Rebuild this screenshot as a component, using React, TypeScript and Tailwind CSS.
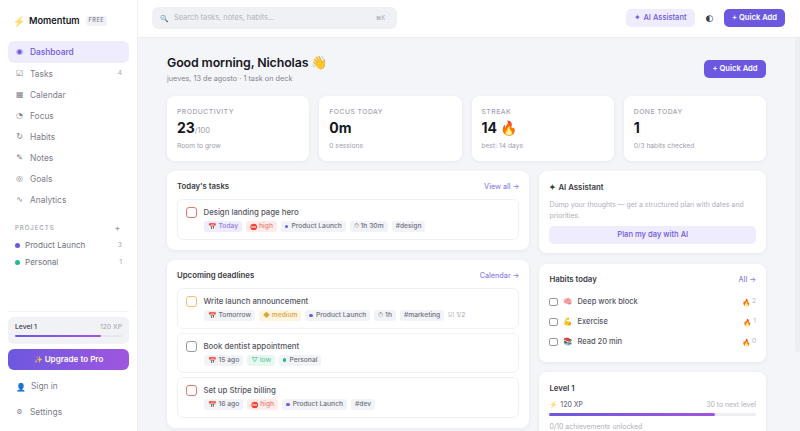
import React from "react";

const nav: [string, string, string?][] = [
  ["◉", "Dashboard"],
  ["☑", "Tasks", "4"],
  ["▦", "Calendar"],
  ["◔", "Focus"],
  ["↻", "Habits"],
  ["✎", "Notes"],
  ["◎", "Goals"],
  ["∿", "Analytics"],
];

function Chip({ tone = "gray", children }: { tone?: string; children: React.ReactNode }) {
  const cls =
    tone === "violet"
      ? "bg-[#efecfd] text-[#8f7fe8]"
      : tone === "red"
        ? "bg-[#fdecea] text-[#ec7f78]"
        : tone === "amber"
          ? "bg-[#fdf5e0] text-[#d9a441]"
          : tone === "green"
            ? "bg-[#e8f8f1] text-[#5ec9a0]"
            : "bg-[#f2f3f6] text-[#71717f]";
  return (
    <span className={`flex h-[11px] items-center gap-[2px] rounded-[3px] px-[4px] text-[6.7px] font-medium leading-none ${cls}`}>
      {children}
    </span>
  );
}

function Dot({ color }: { color: string }) {
  return <span className={`mr-[1px] h-[3.5px] w-[3.5px] rounded-full ${color}`} />;
}

function Cal() {
  return <span className="text-[7px] leading-none">📅</span>;
}

function Stop() {
  return <span className="text-[6px] leading-none">⛔</span>;
}

function Task({ title, box, chips }: { title: string; box: string; chips: React.ReactNode }) {
  return (
    <div className="flex h-[40.5px] gap-[6.5px] rounded-[6px] border border-[#f0f1f5] bg-white pl-[8px] pt-[7px]">
      <span className={`h-[11px] w-[11px] shrink-0 rounded-[3px] border ${box}`} />
      <div className="flex flex-col gap-[4px]">
        <div className="text-[7.8px] font-medium leading-[10px] text-[#55555f]">{title}</div>
        <div className="flex items-center gap-[4px]">{chips}</div>
      </div>
    </div>
  );
}

function Stat({ label, value, unit, sub }: { label: string; value: React.ReactNode; unit?: string; sub: string }) {
  return (
    <div className="h-[65px] rounded-[8px] bg-white px-[10px] pt-[10.5px] shadow-[0_1px_4px_rgba(30,30,60,0.06)]">
      <div className="text-[6.8px] font-medium leading-[9px] tracking-[0.07em] text-[#a5a5b0]">{label}</div>
      <div className="mt-[2.5px] flex h-[20px] items-baseline text-[14px] font-bold leading-[20px] text-[#17171f]">
        {value}
        {unit && <span className="text-[7.5px] font-normal text-[#9a9aa6]">{unit}</span>}
      </div>
      <div className="mt-[3.5px] text-[6.7px] leading-[9px] text-[#a0a0ab]">{sub}</div>
    </div>
  );
}

function Habit({ emoji, name, n }: { emoji: string; name: string; n: string }) {
  return (
    <div className="flex h-[20px] items-center">
      <span className="mr-[5.5px] h-[8.5px] w-[8.5px] rounded-[2px] border border-[#9a9aa3]" />
      <span className="mr-[5px] w-[9px] text-[7.5px] leading-none">{emoji}</span>
      <span className="text-[7.5px] font-medium text-[#55555f]">{name}</span>
      <span className="ml-auto flex items-center gap-[1px] text-[6.5px] text-[#b5b5be]">
        <span className="text-[7px] leading-none">🔥</span> {n}
      </span>
    </div>
  );
}

const card = "rounded-[8px] bg-white px-[10px] pt-[10px] shadow-[0_1px_4px_rgba(30,30,60,0.06)]";
const title = "text-[7.8px] font-semibold text-[#3a3a44]";
const link = "text-[7.2px] font-medium text-[#8f7fe8]";

export default function App() {
  return (
    <div className="flex h-screen overflow-hidden bg-white font-['Inter',sans-serif] text-[#17171f]">
      <aside className="flex w-[138px] shrink-0 flex-col border-r border-[#eceef2] bg-white px-[8px]">
        <div className="flex h-[41px] items-center gap-[4px] pl-[5px]">
          <span className="text-[10px] leading-none opacity-70">⚡</span>
          <span className="text-[9.2px] font-semibold text-[#17171f]">Momentum</span>
          <span className="ml-[2px] rounded-[3px] bg-[#f1f2f6] px-[3px] py-[1.5px] text-[5.6px] font-semibold leading-[7px] tracking-[0.08em] text-[#8c8c98]">FREE</span>
        </div>
        <nav className="flex flex-col">
          {nav.map(([g, label, n], i) => (
            <div
              key={label}
              className={`flex items-center rounded-[6px] pl-[8px] pr-[7px] text-[8.4px] ${
                i === 0 ? "h-[22px] bg-[#efecfd] font-medium text-[#6c58e0]" : "h-[21px] pt-[1px] text-[#7d7d89]"
              }`}
            >
              <span className="mr-[7px] w-[7px] text-center font-['DejaVu_Sans',sans-serif] text-[8px] leading-none">{g}</span>
              {label}
              {n && <span className="ml-auto text-[6.5px] text-[#a5a5b0]">{n}</span>}
            </div>
          ))}
        </nav>
        <div className="mt-[12px] flex h-[12px] items-center justify-between pl-[7px] pr-[9px] text-[6.2px] font-medium tracking-[0.14em] text-[#a0a0ab]">
          PROJECTS <span className="text-[8px] tracking-normal text-[#8c8c98]">+</span>
        </div>
        <div className="mt-[3px] flex flex-col">
          <div className="flex h-[17px] items-center pl-[7px] pr-[7px] text-[8.1px] text-[#6f6f7b]">
            <span className="mr-[5.5px] h-[4.5px] w-[4.5px] rounded-full bg-[#6c58e0]" />
            Product Launch
            <span className="ml-auto text-[6.8px] text-[#a5a5b0]">3</span>
          </div>
          <div className="flex h-[17px] items-center pl-[7px] pr-[7px] text-[8.1px] text-[#6f6f7b]">
            <span className="mr-[5.5px] h-[4.5px] w-[4.5px] rounded-full bg-[#22b98a]" />
            Personal
            <span className="ml-auto text-[6.8px] text-[#a5a5b0]">1</span>
          </div>
        </div>
        <div className="mt-auto border-t border-[#f1f2f5] pt-[5px]">
          <div className="h-[27px] rounded-[6px] bg-[#f1f2f6] px-[7px] pt-[5px]">
            <div className="flex items-center justify-between text-[6.8px] leading-[9px]">
              <span className="font-semibold text-[#55555f]">Level 1</span>
              <span className="text-[#a5a5b0]">120 XP</span>
            </div>
            <div className="mt-[4px] h-[2px] rounded-full bg-[#e6e7ee]">
              <div className="h-full w-[80%] rounded-full bg-gradient-to-r from-[#6c58e0] to-[#a055e0]" />
            </div>
          </div>
          <div className="mt-[5px] flex h-[21px] items-center justify-center gap-[2px] rounded-[6px] bg-gradient-to-r from-[#6c58e0] to-[#a055e0] text-[8.1px] font-semibold text-white">
            <span className="text-[7px] leading-none opacity-80">✨</span>Upgrade to Pro
          </div>
          <div className="mt-[4px] mb-[1px] flex h-[25px] items-center pl-[8px] text-[8.4px] text-[#7d7d89]">
            <span className="mr-[7px] w-[8px] text-[8px] leading-none">👤</span>Sign in
          </div>
          <div className="flex h-[25px] items-center pb-[1px] pl-[8px] text-[8.4px] text-[#7d7d89]">
            <span className="mr-[7px] w-[7px] text-center font-['DejaVu_Sans',sans-serif] text-[7px] leading-none">⚙</span>Settings
          </div>
          <div className="h-[6px]" />
        </div>
      </aside>

      <div className="flex min-w-0 flex-1 flex-col">
        <header className="flex h-[38px] shrink-0 items-center border-b border-[#eceef2] bg-white pb-[1px] pl-[14px] pr-[15px]">
          <div className="flex h-[22px] w-[245px] items-center rounded-[6px] bg-[#f0f1f5] pl-[8px] pr-[12px]">
            <span className="mr-[5px] text-[7px] leading-none">🔍</span>
            <span className="text-[7.4px] text-[#b0b0ba]">Search tasks, notes, habits...</span>
            <span className="ml-auto text-[5.6px] text-[#a5a5b0]">⌘K</span>
          </div>
          <div className="ml-auto flex h-[18px] w-[69px] items-center justify-center rounded-[5px] bg-[#efecfd] text-[7.6px] font-medium text-[#6c58e0]">
            ✦ AI Assistant
          </div>
          <span className="mx-[10px] w-[9px] text-center font-['DejaVu_Sans',sans-serif] text-[9px] leading-none text-[#3a3a44]">◐</span>
          <div className="flex h-[18px] w-[61px] items-center justify-center rounded-[5px] bg-[#6c58e0] text-[7.6px] font-semibold text-white">
            + Quick Add
          </div>
        </header>

        <div className="flex min-h-0 flex-1 bg-[#f4f5f9]">
          <main className="min-h-0 min-w-0 flex-1 overflow-hidden pl-[29px] pr-[29px] pt-[14px]">
            <div className="flex items-start justify-between">
              <div>
                <h1 className="flex items-center gap-[3px] text-[12.4px] font-semibold leading-[21px] tracking-[-0.01em] text-[#17171f]">
                  Good morning, Nicholas <span className="text-[13px] leading-none">👋</span>
                </h1>
                <p className="mt-[1px] text-[7.3px] leading-[10px] text-[#84848f]">jueves, 13 de agosto · 1 task on deck</p>
              </div>
              <div className="mt-[8px] flex h-[18px] w-[62px] items-center justify-center rounded-[5px] bg-[#6c58e0] text-[7.6px] font-semibold text-white">
                + Quick Add
              </div>
            </div>

            <div className="mt-[12px] grid grid-cols-4 gap-[10px]">
              <Stat label="PRODUCTIVITY" value="23" unit="/100" sub="Room to grow" />
              <Stat label="FOCUS TODAY" value="0m" sub="0 sessions" />
              <Stat label="STREAK" value="14 🔥" sub="best: 14 days" />
              <Stat label="DONE TODAY" value="1" sub="0/3 habits checked" />
            </div>

            <div className="mt-[10px] grid grid-cols-[1.6fr_1fr] items-start gap-[10px]">
              <div className="flex flex-col gap-[10px]">
                <section className={`h-[79px] ${card}`}>
                  <div className="flex h-[12px] items-center justify-between">
                    <h2 className={title}>Today's tasks</h2>
                    <span className={link}>View all →</span>
                  </div>
                  <div className="mt-[6px]">
                    <Task
                      title="Design landing page hero"
                      box="border-[#e5786f]"
                      chips={
                        <>
                          <Chip tone="violet"><Cal />Today</Chip>
                          <Chip tone="red"><Stop />high</Chip>
                          <Chip><Dot color="bg-[#6c58e0]" />Product Launch</Chip>
                          <Chip>⏱ 1h 30m</Chip>
                          <Chip>#design</Chip>
                        </>
                      }
                    />
                  </div>
                </section>
                <section className={`h-[168px] ${card}`}>
                  <div className="flex h-[12px] items-center justify-between">
                    <h2 className={title}>Upcoming deadlines</h2>
                    <span className={link}>Calendar →</span>
                  </div>
                  <div className="mt-[6px] flex flex-col gap-[4px]">
                    <Task
                      title="Write launch announcement"
                      box="border-[#f5bd73]"
                      chips={
                        <>
                          <Chip><Cal />Tomorrow</Chip>
                          <Chip tone="amber">◆ medium</Chip>
                          <Chip><Dot color="bg-[#6c58e0]" />Product Launch</Chip>
                          <Chip>⏱ 1h</Chip>
                          <Chip>#marketing</Chip>
                          <span className="text-[6.7px] text-[#a5a5b0]">☑ 1/2</span>
                        </>
                      }
                    />
                    <Task
                      title="Book dentist appointment"
                      box="border-[#9a9aa3]"
                      chips={
                        <>
                          <Chip><Cal />15 ago</Chip>
                          <Chip tone="green">▽ low</Chip>
                          <Chip><Dot color="bg-[#22b98a]" />Personal</Chip>
                        </>
                      }
                    />
                    <Task
                      title="Set up Stripe billing"
                      box="border-[#e5786f]"
                      chips={
                        <>
                          <Chip><Cal />16 ago</Chip>
                          <Chip tone="red"><Stop />high</Chip>
                          <Chip><Dot color="bg-[#6c58e0]" />Product Launch</Chip>
                          <Chip>#dev</Chip>
                        </>
                      }
                    />
                  </div>
                </section>
              </div>

              <div className="flex flex-col gap-[11px]">
                <section className={`h-[82px] ${card}`}>
                  <h2 className={`h-[12px] leading-[12px] ${title}`}>✦ AI Assistant</h2>
                  <p className="mt-[7px] text-[6.9px] leading-[10.5px] text-[#b0b0ba]">Dump your thoughts — get a structured plan with dates and priorities.</p>
                  <div className="mt-[5px] flex h-[17.5px] items-center justify-center rounded-[5px] bg-[#efecfd] text-[7.6px] font-medium text-[#6c58e0]">
                    Plan my day with AI
                  </div>
                </section>
                <section className={`h-[98px] ${card}`}>
                  <div className="flex h-[12px] items-center justify-between">
                    <h2 className={title}>Habits today</h2>
                    <span className={link}>All →</span>
                  </div>
                  <div className="mt-[6px] flex flex-col">
                    <Habit emoji="🧠" name="Deep work block" n="2" />
                    <Habit emoji="💪" name="Exercise" n="1" />
                    <Habit emoji="📚" name="Read 20 min" n="0" />
                  </div>
                </section>
                <section className={`-mt-[1px] h-[92px] ${card}`}>
                  <h2 className={`h-[12px] leading-[12px] ${title}`}>Level 1</h2>
                  <div className="mt-[6px] flex items-center justify-between text-[6.9px] leading-[10px]">
                    <span className="font-medium text-[#6f6f7b]"><span className="opacity-60">⚡</span> 120 XP</span>
                    <span className="text-[#b0b0ba]">30 to next level</span>
                  </div>
                  <div className="mt-[3px] h-[3px] rounded-full bg-[#eceef2]">
                    <div className="h-full w-[80%] rounded-full bg-gradient-to-r from-[#6c58e0] to-[#a055e0]" />
                  </div>
                  <p className="mt-[6px] text-[6.9px] leading-[10px] text-[#b0b0ba]">0/10 achievements unlocked</p>
                </section>
              </div>
            </div>
          </main>
          <div className="w-[5px] shrink-0">
            <div className="h-[314px] rounded-b-[3px] bg-[#eceef4]" />
          </div>
        </div>
      </div>
    </div>
  );
}
